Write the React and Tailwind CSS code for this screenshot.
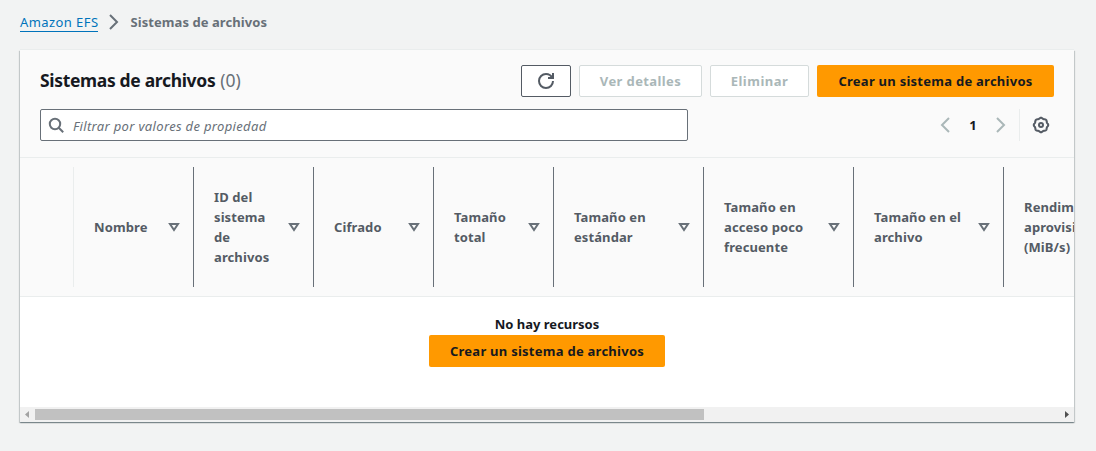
import React from "react";

const columns = [
  { label: ["Nombre"], width: "w-[120px]" },
  { label: ["ID del", "sistema", "de", "archivos"], width: "w-[120px]" },
  { label: ["Cifrado"], width: "w-[120px]" },
  { label: ["Tamaño", "total"], width: "w-[120px]" },
  { label: ["Tamaño en", "estándar"], width: "w-[150px]" },
  { label: ["Tamaño en", "acceso poco", "frecuente"], width: "w-[150px]" },
  { label: ["Tamaño en el", "archivo"], width: "w-[150px]" },
  { label: ["Rendimiento", "aprovisionado", "(MiB/s)"], width: "w-[150px]" },
];

function Icon({ children, className = "" }) {
  return (
    <svg viewBox="0 0 16 16" className={`size-4 shrink-0 overflow-visible fill-none stroke-current stroke-2 ${className}`}>
      {children}
    </svg>
  );
}

function Gear() {
  const points = Array.from({ length: 96 }, (_, i) => {
    const a = (i / 96) * Math.PI * 2;
    const r = 6.8 + 0.45 * Math.cos(a * 8);
    return `${(8 + r * Math.cos(a)).toFixed(2)},${(8 + r * Math.sin(a)).toFixed(2)}`;
  }).join(" ");
  return (
    <Icon className="text-[#545b64]">
      <polygon points={points} />
      <circle cx="8" cy="8" r="2" />
    </Icon>
  );
}

function PrimaryButton({ className = "" }) {
  return (
    <button className={`flex h-8 items-center justify-center rounded-[2px] bg-[#ff9900] font-bold whitespace-nowrap text-[#16191f] tracking-[0.26px] ${className}`}>
      Crear un sistema de archivos
    </button>
  );
}

export default function App() {
  return (
    <div className="h-[451px] overflow-hidden bg-[#f2f3f3] px-5 font-['Noto_Sans','Open_Sans',sans-serif] text-[13px] leading-5 text-[#16191f]">
      <nav className="flex h-[50px] items-start pt-3">
        <a className="h-5 border-b border-[#0073bb] whitespace-nowrap tracking-[0.42px] text-[#0073bb]">Amazon EFS</a>
        <Icon className="mt-0.5 ml-2 text-[#687078]"><path d="m4 1 7 7-7 7" /></Icon>
        <span className="ml-2 font-bold whitespace-nowrap tracking-[0.07px] text-[#687078]">Sistemas de archivos</span>
      </nav>

      <main className="flex h-[372px] w-[1054px] flex-col bg-white shadow-[0_1px_1px_0_rgba(0,28,36,0.3),1px_1px_1px_0_rgba(0,28,36,0.15),-1px_1px_1px_0_rgba(0,28,36,0.15),0_-1px_0_0_#eaeded]">
        <header className="h-[108px] shrink-0 border-b border-[#eaeded] bg-[#fafafa] px-5 pt-[15px]">
          <div className="flex h-8 items-center">
            <h1 className="flex gap-[5px] pb-[2px] text-[17.5px] leading-[22px] font-bold whitespace-nowrap">
              <span className="tracking-[-0.33px]">Sistemas de archivos</span>
              <span className="font-normal text-[#687078]">(0)</span>
            </h1>
            <div className="ml-auto flex gap-2">
              <button className="flex h-8 w-[50px] items-center justify-center rounded-[2px] border border-[#545b64] bg-white text-[#545b64]">
                <Icon>
                  <path d="M15 0v5l-5-.04" />
                  <path d="M15 8c0 3.87-3.13 7-7 7s-7-3.13-7-7 3.13-7 7-7c2.79 0 5.2 1.63 6.33 4" />
                </Icon>
              </button>
              <button className="h-8 w-[123px] rounded-[2px] border border-[#d5dbdb] bg-white font-bold tracking-[0.4px] text-[#aab7b8]">Ver detalles</button>
              <button className="h-8 w-[99px] rounded-[2px] border border-[#d5dbdb] bg-white font-bold tracking-[0.5px] text-[#aab7b8]">Eliminar</button>
              <PrimaryButton className="w-[237px]" />
            </div>
          </div>
          <div className="mt-3 flex h-8 items-center">
            <div className="flex h-8 w-[648px] items-center rounded-[2px] border border-[#687078] bg-white pl-[7px] text-[#687078]">
              <Icon><circle cx="7" cy="7" r="5.2" /><path d="m10.5 10.5 4.7 4.7" /></Icon>
              <span className="ml-[9px] pt-[2px] whitespace-nowrap tracking-[0.33px] italic">Filtrar por valores de propiedad</span>
            </div>
            <div className="ml-auto flex h-8 items-center">
              <Icon className="text-[#aab7b8]"><path d="m12 1-7 7 7 7" /></Icon>
              <span className="w-10 text-center font-bold">1</span>
              <Icon className="text-[#aab7b8]"><path d="m4 1 7 7-7 7" /></Icon>
              <span className="mr-[13px] ml-[10px] h-8 w-px bg-[#eaeded]" />
              <div className="mr-[5px]"><Gear /></div>
            </div>
          </div>
        </header>

        <div className="flex h-[139px] shrink-0 overflow-hidden border-b border-[#eaeded] bg-[#fafafa] py-[9px] font-bold tracking-[0.1px] text-[#545b64]">
          <div className="w-[54px] shrink-0 border-r border-[#eaeded]" />
          {columns.map((column) => (
            <div key={column.label.join(" ")} className={`flex shrink-0 items-center border-r border-[#687078] pr-[11px] pl-5 ${column.width}`}>
              <div className="whitespace-nowrap">
                {column.label.map((line) => <div key={line}>{line}</div>)}
              </div>
              <Icon className="ml-auto text-[#687078]"><path d="M4 5h8l-4 6-4-6z" /></Icon>
            </div>
          ))}
        </div>

        <section className="flex flex-1 flex-col items-center pt-[17px]">
          <b className="h-[21px]">No hay recursos</b>
          <PrimaryButton className="w-[236px]" />
        </section>

        <div className="flex h-[15px] shrink-0 items-center bg-[#f1f1f1]">
          <svg className="h-[15px] w-[15px] fill-[#a3a3a3]" viewBox="0 0 15 15"><path d="M9 4v7L5 7.5z" /></svg>
          <div className="h-[11px] w-[669px] bg-[#c1c1c1]" />
          <svg className="ml-auto h-[15px] w-[15px] fill-[#505050]" viewBox="0 0 15 15"><path d="M6 4v7l4-3.5z" /></svg>
        </div>
      </main>
    </div>
  );
}
